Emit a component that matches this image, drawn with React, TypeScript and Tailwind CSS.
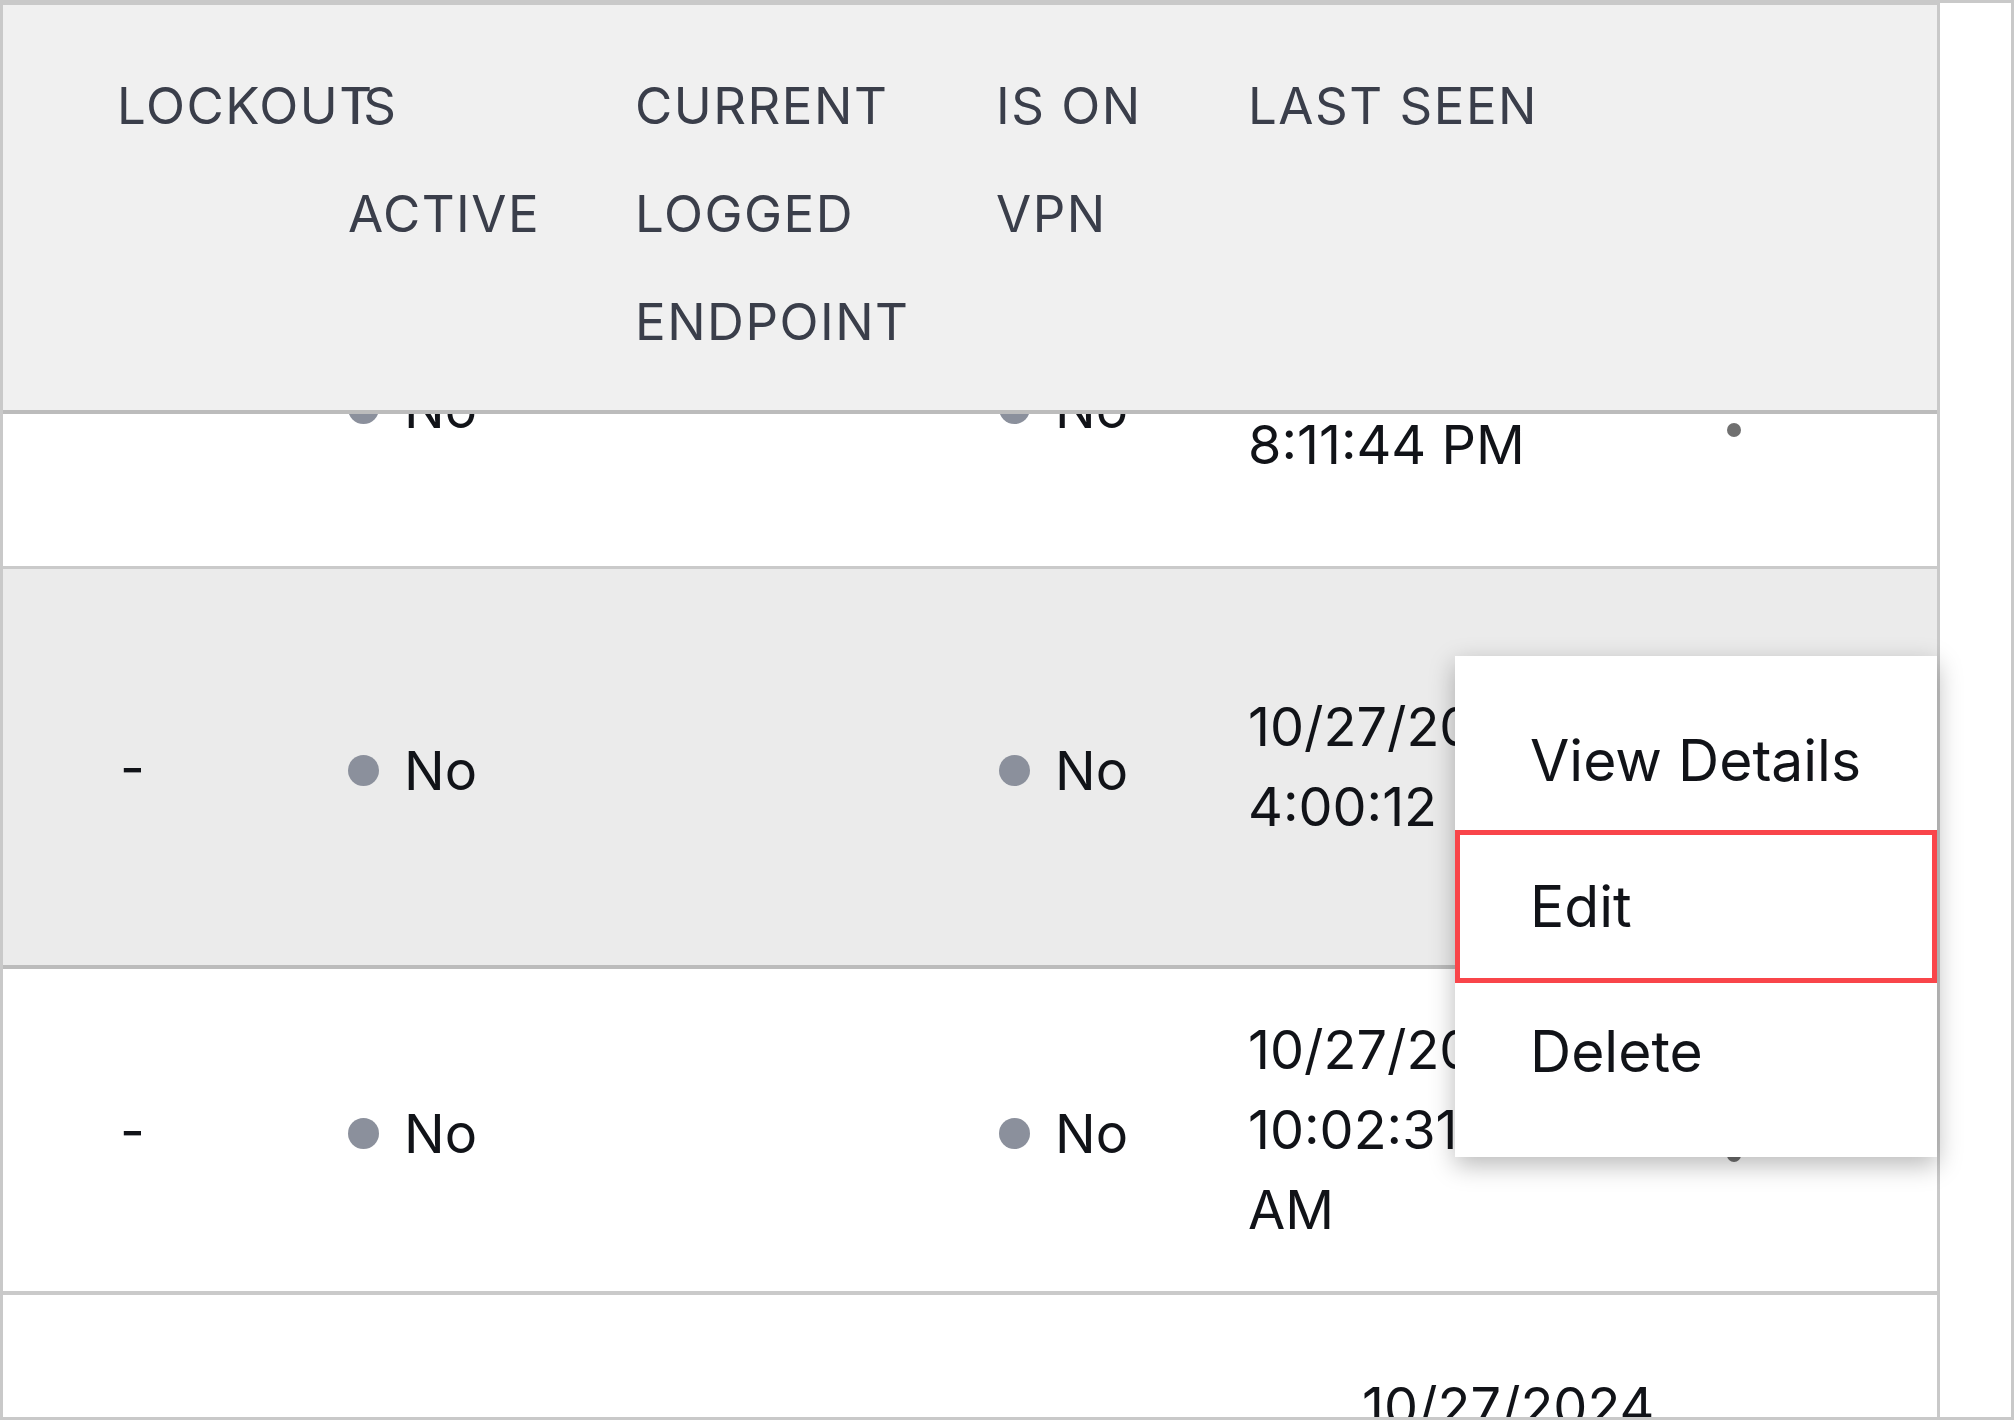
import React from "react";

const Dot = () => <span className="inline-block w-[31px] h-[31px] rounded-full bg-[#8b909c] mr-[25px] shrink-0" />;

const Kebab = () => (
  <div className="flex flex-col gap-[11px] items-center">
    <span className="w-[14px] h-[14px] rounded-full bg-[#707070]" />
    <span className="w-[14px] h-[14px] rounded-full bg-[#707070]" />
    <span className="w-[14px] h-[14px] rounded-full bg-[#707070]" />
  </div>
);

function RowContent({ dates }: { dates: string[] }) {
  return (
    <div className="flex items-center h-full text-[54px] text-[#111318]">
      <div className="w-[345px] shrink-0 pl-[117px]">-</div>
      <div className="w-[287px] shrink-0 flex items-center pt-[6px]"><Dot />No</div>
      <div className="w-[361px] shrink-0" />
      <div className="w-[252px] shrink-0 flex items-center pl-[3px] pt-[6px]"><Dot />No</div>
      <div className="w-[466px] shrink-0 leading-[80px] whitespace-nowrap">
        {dates.map((d, i) => <div key={i}>{d}</div>)}
      </div>
      <div className="w-[40px] shrink-0 flex justify-center"><Kebab /></div>
    </div>
  );
}

export default function App() {
  return (
    <div className="w-[2014px] h-[1420px] overflow-hidden bg-white border-[3px] border-[#c9c9c9] relative" style={{ fontFamily: "Inter, 'Noto Sans', sans-serif" }}>
      <div className="w-[1937px] h-full border-r-[3px] border-t-[2px] border-[#c9c9c9] flex flex-col">
        <div className="h-[409px] shrink-0 bg-[#f0f0f0] border-b-[4px] border-[#bcbcbc] flex text-[51px] tracking-[1.5px] text-[#3a3e4a] leading-[108px] pt-[47px] z-10">
          <div className="w-[345px] shrink-0 pl-[114px]">LOCKOUT</div>
          <div className="w-[287px] shrink-0"><div>IS</div><div>ACTIVE</div></div>
          <div className="w-[361px] shrink-0"><div>CURRENT</div><div>LOGGED</div><div>ENDPOINT</div></div>
          <div className="w-[252px] shrink-0"><div>IS ON</div><div>VPN</div></div>
          <div className="shrink-0">LAST SEEN</div>
        </div>
        <div className="h-[155px] shrink-0 overflow-hidden border-b-[3px] border-[#cacaca]">
          <div className="h-[320px] -mt-[169px]">
            <RowContent dates={["10/27/2024,", "8:11:44 PM"]} />
          </div>
        </div>
        <div className="h-[400px] shrink-0 bg-[#ebebeb] border-b-[4px] border-[#bcbcbc]">
          <RowContent dates={["10/27/2024,", "4:00:12 PM"]} />
        </div>
        <div className="h-[326px] shrink-0 border-b-[4px] border-[#cacaca]">
          <RowContent dates={["10/27/2024,", "10:02:31", "AM"]} />
        </div>
        <div className="flex-1 pl-[1359px] pt-[72px] text-[54px] text-[#111318] leading-[80px]">10/27/2024,</div>
      </div>
      <div className="absolute left-[1452px] top-[653px] w-[482px] h-[501px] bg-white shadow-[0_8px_24px_rgba(0,0,0,0.28)] flex flex-col text-[57px] text-[#111318] py-[36px]">
        <div className="h-[140px] flex items-center pl-[75px]">View Details</div>
        <div className="h-[154px] flex items-center pl-[70px] border-[5px] border-[#f9454a]">Edit</div>
        <div className="h-[140px] flex items-center pl-[75px]">Delete</div>
      </div>
    </div>
  );
}
